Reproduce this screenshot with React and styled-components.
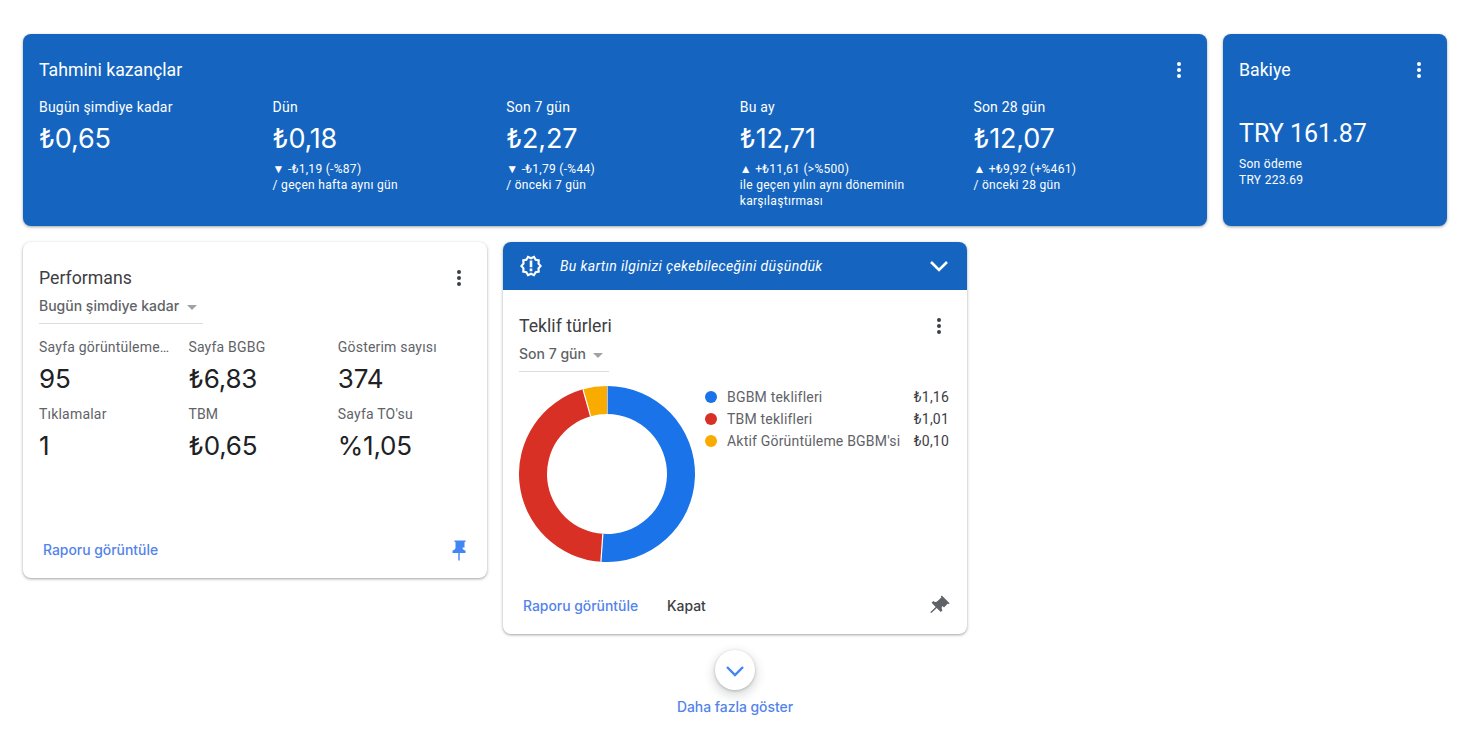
import React from "react";
import styled, { createGlobalStyle } from "styled-components";

const Global = createGlobalStyle`
  html, body { margin: 0; padding: 0; background: #fff; }
  body { font-family: Roboto, "Liberation Sans", sans-serif; }
`;
const Page = styled.div`
  width: 1462px; height: 756px; box-sizing: border-box; overflow: hidden;
  padding: 34px 15px 0 23px; display: flex; flex-direction: column; gap: 16px;
`;
const Row = styled.div`display: flex; gap: 16px; align-items: flex-start;`;
const Card = styled.section`
  width: ${p => p.$w}px; height: ${p => p.$h}px; box-sizing: border-box; flex: none;
  border-radius: 8px; overflow: hidden; display: flex; flex-direction: column;
  background: ${p => (p.$blue ? "#1565c0" : "#fff")};
  color: ${p => (p.$blue ? "#fff" : "#3c4043")};
  box-shadow: 0 1px 2px rgba(60,64,67,.3), 0 1px 3px 1px rgba(60,64,67,.15);
`;
const Body = styled.div`flex: 1; display: flex; flex-direction: column; padding: 24px 16px 0; min-height: 0;`;
const Head = styled.div`display: flex; justify-content: space-between; align-items: center; height: 24px;`;
const Title = styled.h2`margin: 0; font: 400 17.7px/24px Roboto, sans-serif;`;
const Kebab = styled.svg`width: 24px; height: 24px; flex: none; fill: ${p => p.$c};`;
const Dots = ({ c }) => (
  <Kebab $c={c} viewBox="0 0 24 24"><circle cx="12" cy="6" r="2" /><circle cx="12" cy="12" r="2" /><circle cx="12" cy="18" r="2" /></Kebab>
);
const Cols = styled.div`display: grid; grid-template-columns: repeat(5, 233.6px); margin-top: 15px;`;
const ColLabel = styled.div`font: 400 14px/20px Roboto, sans-serif; letter-spacing: .2px; height: 20px; white-space: nowrap;`;
const Big = styled.div`font: 400 27px/32px Inter, Roboto, sans-serif; margin-top: 6px; letter-spacing: -.2px;`;
const Delta = styled.div`font: 400 12px/16px Roboto, sans-serif; letter-spacing: .3px; margin-top: 6px; width: 190px;`;
const BalanceBig = styled.div`font: 400 25px/32px Roboto, sans-serif; margin-top: 36px;`;
const BalanceNote = styled.div`font: 400 12px/16px Roboto, sans-serif; letter-spacing: .3px; margin-top: 6px;`;
const Select = styled.div`
  display: flex; align-items: center; justify-content: space-between; align-self: flex-start; box-sizing: border-box;
  width: ${p => p.$w}px; height: 30px; border-bottom: 1px solid #dadce0; margin-top: 4px; padding: 0 ${p => p.$pr}px 5px 0;
  font: 500 14px/20px Inter, Roboto, sans-serif; color: #5f6368; white-space: nowrap;
`;
const Caret = styled.span`width: 0; height: 0; border: 5px solid transparent; border-top-color: #a0a3a6; border-bottom: 0; margin-top: 2px;`;
const Metrics = styled.div`display: grid; grid-template-columns: repeat(3, 149.4px); grid-auto-rows: 67px; margin-top: 13px;`;
const MLabel = styled.div`font: 400 14px/20px Roboto, sans-serif; letter-spacing: .2px; color: #5f6368; white-space: nowrap;`;
const MValue = styled.div`font: 400 26px/32px Inter, Roboto, sans-serif; letter-spacing: -.2px; color: #202124; margin-top: 6px;`;
const Foot = styled.div`margin: auto -16px 0; display: flex; align-items: center; height: 56px; padding: 0 16px 0 20px;`;
const Link = styled.a`font: 500 13.9px/20px Inter, Roboto, sans-serif; color: ${p => (p.$dark ? "#3c4043" : "#5383ec")}; margin-right: ${p => p.$mr || 0}px;`;
const PinWrap = styled.svg`width: 24px; height: 24px; margin-left: auto; margin-right: ${p => p.$end}px; fill: ${p => p.$c}; transform: rotate(${p => p.$r}deg);`;
const Pin = ({ c, r, end }) => (
  <PinWrap $c={c} $r={r} $end={end} viewBox="0 0 24 24"><path d="M16.5 9.500V4h1V2.500h-11V4h1v5.500c0 1.660-1.340 3-3 3V15h5.800v7l.7 1 .7-1v-7h5.800v-2.500c-1.660 0-3-1.340-3-3z" /></PinWrap>
);
const Banner = styled.div`height: 48px; flex: none; background: #1565c0; color: #fff; display: flex; align-items: center; padding: 0 16px; gap: 17px;`;
const BannerText = styled.div`font: italic 400 14px/20px Roboto, sans-serif; letter-spacing: .36px; flex: 1;`;
const Chart = styled.div`display: flex; margin-top: 14px; gap: 10px;`;
const Legend = styled.div`flex: 1; display: flex; flex-direction: column; gap: 2px; padding: 1px 2px 0 0;`;
const LegendRow = styled.div`display: flex; align-items: center; height: 20px; font: 400 14px/20px Roboto, sans-serif; letter-spacing: .2px; color: #5f6368;`;
const Dot = styled.span`width: 12px; height: 12px; border-radius: 50%; background: ${p => p.$c}; margin-right: 10px; flex: none;`;
const LegendValue = styled.span`margin-left: auto; color: #3c4043; font-size: 14px;`;
const More = styled.div`display: flex; flex-direction: column; align-items: center; width: 464px; margin-left: 480px;`;
const Fab = styled.div`width: 40px; height: 40px; border-radius: 50%; background: #fff; display: flex; align-items: center; justify-content: center; box-shadow: 0 1px 3px rgba(60,64,67,.3), 0 4px 8px 3px rgba(60,64,67,.15);`;
const MoreLabel = styled(Link)`margin-top: 7px;`;

const columns = [
  ["Bugün şimdiye kadar", "₺0,65"],
  ["Dün", "₺0,18", "▼ -₺1,19 (-%87)", "/ geçen hafta aynı gün"],
  ["Son 7 gün", "₺2,27", "▼ -₺1,79 (-%44)", "/ önceki 7 gün"],
  ["Bu ay", "₺12,71", "▲ +₺11,61 (>%500)", "ile geçen yılın aynı döneminin karşılaştırması"],
  ["Son 28 gün", "₺12,07", "▲ +₺9,92 (+%461)", "/ önceki 28 gün"],
];
const metrics = [
  ["Sayfa görüntüleme…", "95"], ["Sayfa BGBG", "₺6,83"], ["Gösterim sayısı", "374"],
  ["Tıklamalar", "1"], ["TBM", "₺0,65"], ["Sayfa TO'su", "%1,05"],
];
const offers = [
  ["BGBM teklifleri", "₺1,16", "#1a73e8", 1.16],
  ["TBM teklifleri", "₺1,01", "#d93025", 1.01],
  ["Aktif Görüntüleme BGBM'si", "₺0,10", "#f9ab00", 0.10],
];

function Donut() {
  const R = 88, r = 60, c = 88, total = 2.27;
  let a = 0;
  const pt = (rad, ang) => [c + rad * Math.sin(ang), c - rad * Math.cos(ang)];
  return (
    <svg width="176" height="177" viewBox="0 0 176 177" style={{ flex: "none" }}>
      {offers.map(o => {
        const s = a, e = a + (o[3] / total) * Math.PI * 2;
        a = e;
        const large = e - s > Math.PI ? 1 : 0;
        const [x1, y1] = pt(R, s), [x2, y2] = pt(R, e), [x3, y3] = pt(r, e), [x4, y4] = pt(r, s);
        return (
          <g key={o[0]}>
            <path fill={o[2]} d={`M${x1} ${y1}A${R} ${R} 0 ${large} 1 ${x2} ${y2}L${x3} ${y3}A${r} ${r} 0 ${large} 0 ${x4} ${y4}Z`} />
            <path stroke="#fff" strokeWidth="1.2" d={`M${x1} ${y1}L${x4} ${y4}`} />
          </g>
        );
      })}
    </svg>
  );
}

export default function App() {
  return (
    <Page>
      <Global />
      <Row>
        <Card $blue $w={1184} $h={192}>
          <Body>
            <Head><Title>Tahmini kazançlar</Title><Dots c="#fff" /></Head>
            <Cols>
              {columns.map(c => (
                <div key={c[0]}>
                  <ColLabel>{c[0]}</ColLabel>
                  <Big>{c[1]}</Big>
                  {c[2] && <Delta>{c[2]}<br />{c[3]}</Delta>}
                </div>
              ))}
            </Cols>
          </Body>
        </Card>
        <Card $blue $w={224} $h={192}>
          <Body>
            <Head><Title>Bakiye</Title><Dots c="#fff" /></Head>
            <BalanceBig>TRY 161.87</BalanceBig>
            <BalanceNote>Son ödeme<br />TRY 223.69</BalanceNote>
          </Body>
        </Card>
      </Row>
      <Row>
        <Card $w={464} $h={336}>
          <Body>
            <Head><Title>Performans</Title><Dots c="#3c4043" /></Head>
            <Select $w={164} $pr={6}>Bugün şimdiye kadar<Caret /></Select>
            <Metrics>
              {metrics.map(m => (
                <div key={m[0]}><MLabel>{m[0]}</MLabel><MValue>{m[1]}</MValue></div>
              ))}
            </Metrics>
            <Foot>
              <Link>Raporu görüntüle</Link>
              <Pin c="#4285f4" r={0} end={-1} />
            </Foot>
          </Body>
        </Card>
        <Card $w={464} $h={392}>
          <Banner>
            <svg width="24" height="24" viewBox="0 0 24 24" fill="#fff">
              <path fillRule="evenodd" d="M23 12l-2.440-2.790.340-3.690-3.610-.820-1.890-3.200L12 2.960 8.600 1.500 6.710 4.690 3.100 5.500l.340 3.700L1 12l2.440 2.790-.340 3.700 3.610.820L8.600 22.500l3.400-1.470 3.400 1.460 1.890-3.190 3.610-.820-.340-3.690L23 12zM18.400 14l.230 2.700-2.640.600-1.390 2.330L12 18.520l-2.600 1.110-1.390-2.330-2.640-.600.230-2.700L3.800 12l1.800-2-.230-2.700 2.640-.590 1.390-2.340L12 5.480l2.600-1.110 1.390 2.340 2.640.590-.230 2.700L20.200 12l-1.800 2zM10.700 14.600h2.600v2.600h-2.600zm0-8h2.600v6.600h-2.600z" />
            </svg>
            <BannerText>Bu kartın ilginizi çekebileceğini düşündük</BannerText>
            <svg width="24" height="24" viewBox="0 0 24 24" fill="none" stroke="#fff" strokeWidth="2.6">
              <path d="M4 8l8 8 8-8" />
            </svg>
          </Banner>
          <Body>
            <Head><Title>Teklif türleri</Title><Dots c="#3c4043" /></Head>
            <Select $w={90} $pr={6}>Son 7 gün<Caret /></Select>
            <Chart>
              <Donut />
              <Legend>
                {offers.map(o => (
                  <LegendRow key={o[0]}><Dot $c={o[2]} />{o[0]}<LegendValue>{o[1]}</LegendValue></LegendRow>
                ))}
              </Legend>
            </Chart>
            <Foot>
              <Link $mr={29}>Raporu görüntüle</Link>
              <Link $dark>Kapat</Link>
              <Pin c="#5f6368" r={45} end={0} />
            </Foot>
          </Body>
        </Card>
      </Row>
      <More>
        <Fab>
          <svg width="24" height="24" viewBox="0 0 24 24" fill="none" stroke="#4285f4" strokeWidth="2.4"><path d="M4 9l8 8 8-8" /></svg>
        </Fab>
        <MoreLabel>Daha fazla göster</MoreLabel>
      </More>
    </Page>
  );
}
